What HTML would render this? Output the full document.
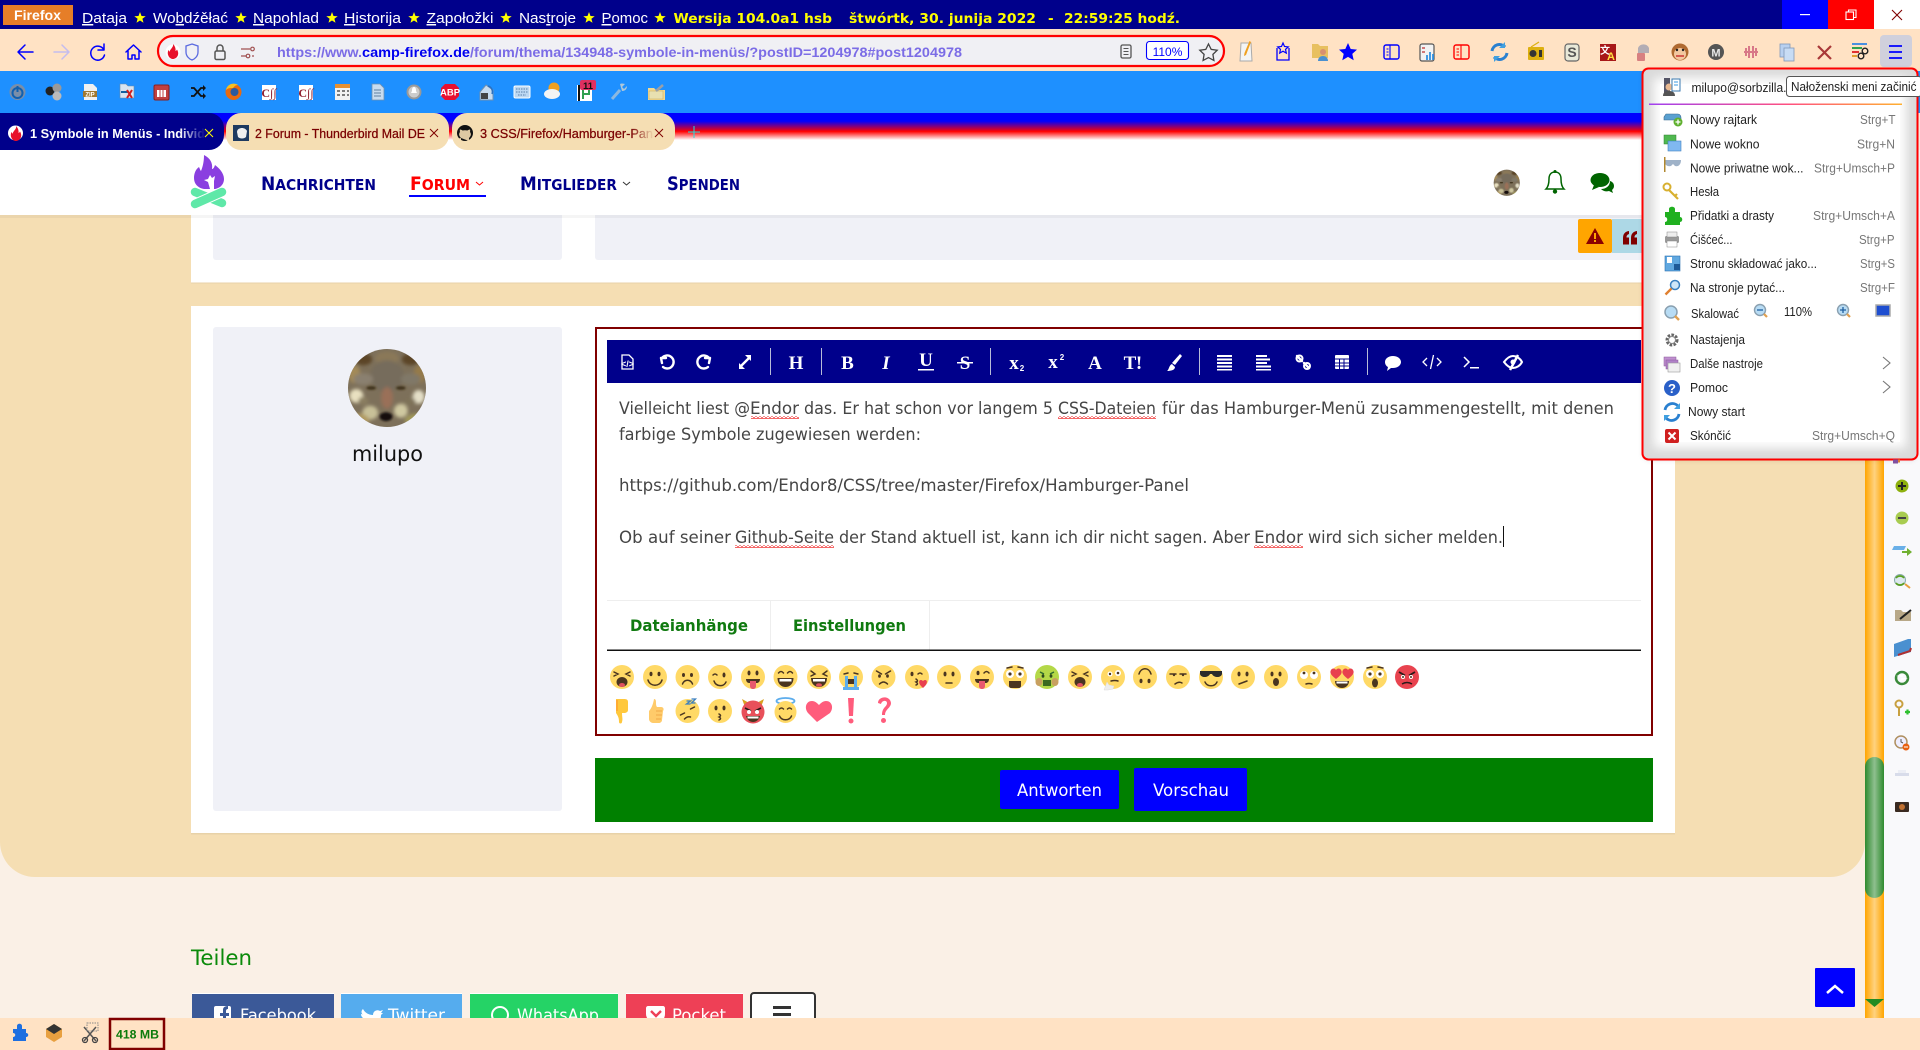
<!DOCTYPE html>
<html lang="de"><head><meta charset="utf-8"><title>Symbole in Menüs</title>
<style>
html,body{margin:0;padding:0;background:#fff;width:1920px;height:1050px;overflow:hidden}
svg{display:block}
text{font-family:"Liberation Sans",sans-serif;white-space:pre}
.d{font-family:"DejaVu Sans",sans-serif}
.r{font-family:"Liberation Serif",serif}
.b{font-weight:700}
.m{font-size:15px;fill:#fff}
.star{fill:#ff0}
.t{font-size:16.5px;fill:#454545;font-family:"DejaVu Sans",sans-serif}
.mi{font-size:12.6px;fill:#222}
.sc{font-size:12.6px;fill:#777}
.tb{fill:#fff;font-weight:700;font-family:"Liberation Serif",serif;font-size:19px;text-anchor:middle}
.nav{font-weight:700;font-size:15.5px;font-family:"DejaVu Sans",sans-serif}
.y{fill:#FFD966}
.k{fill:#4a3520}
.ks{fill:none;stroke:#4a3520;stroke-width:1.5;stroke-linecap:round}
.w{fill:#fff}
.ws{fill:none;stroke:#fff;stroke-width:2.4;stroke-linecap:round;stroke-linejoin:round}
.bs{fill:none;stroke:#00f;stroke-width:1.5;stroke-linecap:round;stroke-linejoin:round}
</style></head><body>
<svg xmlns="http://www.w3.org/2000/svg" width="1920" height="1050" viewBox="0 0 1920 1050">
<defs>
<linearGradient id="tg" x1="0" y1="0" x2="0" y2="1"><stop offset="0" stop-color="#00f"/><stop offset=".3" stop-color="#00f"/><stop offset=".68" stop-color="#f00"/><stop offset="1" stop-color="#fff"/></linearGradient>
<linearGradient id="sb" x1="0" y1="0" x2="1" y2="0"><stop offset="0" stop-color="#FFA500"/><stop offset=".5" stop-color="#FFD27F"/><stop offset="1" stop-color="#FFA500"/></linearGradient>
<linearGradient id="th" x1="0" y1="0" x2="1" y2="0"><stop offset="0" stop-color="#2E8B2E"/><stop offset=".5" stop-color="#8FBF8F"/><stop offset="1" stop-color="#2E8B2E"/></linearGradient>
<linearGradient id="sep" x1="0" y1="0" x2="1" y2="0"><stop offset="0" stop-color="#A040F0"/><stop offset=".55" stop-color="#FF5080"/><stop offset="1" stop-color="#FFB030"/></linearGradient>
<linearGradient id="f1" x1="0" y1="0" x2="1" y2="0"><stop offset="0" stop-color="#00008B" stop-opacity="0"/><stop offset="1" stop-color="#00008B"/></linearGradient>
<linearGradient id="f2" x1="0" y1="0" x2="1" y2="0"><stop offset="0" stop-color="#F5DEB3" stop-opacity="0"/><stop offset="1" stop-color="#F5DEB3"/></linearGradient>
<pattern id="wv" width="4" height="3" patternUnits="userSpaceOnUse"><path d="M0 2.4L2 .6 4 2.4" fill="none" stroke="#e00" stroke-width=".8"/></pattern>
<filter id="bl2"><feGaussianBlur stdDeviation="2"/></filter>
<filter id="bl3"><feGaussianBlur stdDeviation="3"/></filter>
<filter id="bl5"><feGaussianBlur stdDeviation="5"/></filter>
<filter id="bl1"><feGaussianBlur stdDeviation="1.1"/></filter>
<clipPath id="wc"><circle r="39.5"/></clipPath>
<clipPath id="mc"><rect x="1643" y="69" width="274" height="390" rx="6"/></clipPath>
<symbol id="wolf" viewBox="-40 -40 80 80" overflow="visible"><g clip-path="url(#wc)"><rect x="-40" y="-40" width="80" height="80" fill="#7d705a"/>
<g filter="url(#bl2)"><ellipse cx="-24" cy="-29" rx="9" ry="6" fill="#5b4528"/><ellipse cx="24" cy="-29" rx="9" ry="6" fill="#5b4528"/><ellipse cx="-33" cy="-14" rx="6" ry="9" fill="#a38a58"/><ellipse cx="33" cy="-14" rx="6" ry="9" fill="#957a48"/><ellipse cx="0" cy="-30" rx="12" ry="7" fill="#8a7858"/><ellipse cx="0" cy="-12" rx="17" ry="16" fill="#766c5c"/><ellipse cx="-24" cy="-9" rx="10" ry="6" fill="#8a8070"/><ellipse cx="24" cy="-9" rx="10" ry="6" fill="#807868"/><ellipse cx="-31" cy="8" rx="7" ry="7" fill="#e8e0c0"/><ellipse cx="32" cy="9" rx="6" ry="7" fill="#e4dfc8"/><ellipse cx="-24" cy="13" rx="5" ry="4" fill="#8a7e60"/><ellipse cx="23" cy="14" rx="6" ry="4" fill="#7e7258"/><ellipse cx="14" cy="23" rx="7" ry="7" fill="#cfc8a0"/><ellipse cx="-17" cy="25" rx="8" ry="7" fill="#c8c098"/><ellipse cx="0" cy="10" rx="6" ry="11" fill="#9a7058"/><ellipse cx="-29" cy="33" rx="11" ry="7" fill="#b09a60"/><ellipse cx="29" cy="33" rx="11" ry="7" fill="#a09858"/></g>
<g filter="url(#bl1)"><ellipse cx="-1" cy="29" rx="6.500" ry="4.500" fill="#14110e"/><ellipse cx="-16" cy="0" rx="5" ry="1.800" fill="#3a2e18"/><ellipse cx="14" cy="0" rx="5" ry="1.800" fill="#3a2e18"/></g></g></symbol>
</defs>

<!-- page -->
<rect width="1920" height="1050" fill="#FAF0E6"/>
<rect x="0" y="150" width="1865" height="727" rx="35" fill="#F5DEB3"/>
<rect x="0" y="150" width="1865" height="100" fill="#F5DEB3"/>

<!-- previous post -->
<rect x="191" y="190" width="1484" height="93" fill="#fff"/>
<rect x="191" y="282.500" width="1484" height="1" fill="#e8d2a8"/>
<rect x="213" y="190" width="349" height="70" rx="3" fill="#F0F1F7"/>
<rect x="595" y="190" width="1059" height="70" rx="3" fill="#F0F1F7"/>
<rect x="1578" y="219" width="34" height="34" rx="2" fill="#FFA500"/>
<rect x="1612" y="219" width="34" height="34" fill="#ADD8E6"/>
<path d="M1595 228l9 16h-18z" fill="#8B0000"/><rect x="1594" y="233" width="2" height="6" fill="#FFA500"/><rect x="1594" y="240" width="2" height="2" fill="#FFA500"/>
<path d="M1629 231c-4 .5-6 3-6 7v6.500h6v-7h-2.500c0-2 1-3 2.500-3.500zM1637 231c-4 .5-6 3-6 7v6.500h6v-7h-2.500c0-2 1-3 2.500-3.500z" fill="#800000"/>

<!-- post card -->
<rect x="191" y="306" width="1484" height="528" fill="#fff"/>
<rect x="191" y="833" width="1484" height="1.500" fill="#e8d2a8"/>
<rect x="213" y="327" width="349" height="484" rx="3" fill="#F0F1F7"/>
<use href="#wolf" x="347.500" y="348.500" width="79" height="79"/>
<text x="352" y="461" class="d" font-size="21" fill="#111" textLength="71" lengthAdjust="spacingAndGlyphs">milupo</text>

<!-- editor -->
<rect x="596" y="328" width="1056" height="407" fill="#fff" stroke="#800000" stroke-width="2"/>
<rect x="607" y="340" width="1034" height="43" fill="#00008B"/>
<g fill="#b8bcd8"><rect x="770" y="348" width="1" height="27"/><rect x="821" y="348" width="1" height="27"/><rect x="990" y="348" width="1" height="27"/><rect x="1199" y="348" width="1" height="27"/><rect x="1367" y="348" width="1" height="27"/></g>
<g>
<path d="M622 355h7l4 4v10h-11z" fill="none" stroke="#fff" stroke-width="1.3"/><text x="627.500" y="367" font-size="9" fill="#fff" text-anchor="middle" class="b">&lt;/&gt;</text>
<path d="M661 358l1 5M661 358l5 0M662 358a6.500 6.500 0 1 1 1 9" class="ws"/>
<path d="M710 358l-1 5M710 358l-5 0M709 358a6.500 6.500 0 1 0-1 9" class="ws"/>
<path d="M741 366l8-8" class="ws"/><path d="M745 355h6v6zM739 363v6h6z" class="w"/>
<text x="796" y="369" class="tb">H</text>
<text x="847.500" y="369" class="tb">B</text>
<text x="886" y="369" class="tb" font-style="italic">I</text>
<text x="926" y="366" class="tb" font-size="17">U</text><rect x="918" y="369" width="16" height="1.500" fill="#fff"/>
<text x="965" y="369" class="tb" font-weight="400">S</text><rect x="957" y="362" width="16" height="1.500" fill="#fff"/>
<text x="1014" y="369" class="tb" font-size="16" font-family="Liberation Sans">x</text><text x="1022" y="371" fill="#fff" font-size="8" class="b" text-anchor="middle">2</text>
<text x="1053" y="368" class="tb" font-size="16">x</text><text x="1062" y="360" fill="#fff" font-size="8" class="b" text-anchor="middle">2</text>
<text x="1095" y="369" class="tb">A</text>
<text x="1130" y="369" class="tb" font-size="16">T</text><text x="1139" y="369" class="tb" font-size="13">!</text>
<path d="M1180 354l2 2-7 9-3-2zM1172 364l3 3c0 3-4 4-8 4 2-1 2-6 5-7z" class="w"/>
<g fill="#fff"><rect x="1217" y="355" width="15" height="2"/><rect x="1217" y="358.500" width="15" height="2"/><rect x="1217" y="362" width="15" height="2"/><rect x="1217" y="365.500" width="15" height="2"/><rect x="1217" y="369" width="15" height="1.500"/>
<rect x="1256" y="355" width="11" height="2"/><rect x="1256" y="358.500" width="14" height="2"/><rect x="1256" y="362" width="11" height="2"/><rect x="1256" y="365.500" width="15" height="2"/><rect x="1256" y="369" width="15" height="1.500"/></g>
<path d="M1297 356l5 5M1304 363l5 5" class="ws" stroke-width="1.600"/><circle cx="1299.500" cy="358.500" r="3" fill="none" stroke="#fff" stroke-width="2"/><circle cx="1307" cy="366" r="3" fill="none" stroke="#fff" stroke-width="2"/>
<rect x="1335" y="355" width="14" height="14" rx="1" fill="#fff"/><path d="M1335 359h14M1335 363h14M1335 366h14M1339.500 359v10M1344 359v10" stroke="#00008B" stroke-width="1"/>
<path d="M1393 356c5 0 8 3 8 6s-3 6-8 6c-1 0-2 0-2 0l-4 3 1-4c-2-1-3-3-3-5 0-3 3-6 8-6z" class="w"/>
<path d="M1427 358l-4 4 4 4M1437 358l4 4-4 4M1433.500 355l-3 14" fill="none" stroke="#fff" stroke-width="1.300"/>
<path d="M1464 357l5 5-5 5" fill="none" stroke="#fff" stroke-width="1.500"/><rect x="1470" y="367" width="9" height="1.500" fill="#fff"/>
<path d="M1504 362c3-4 6-6 9-6s7 2 9 6c-2 4-6 6-9 6s-6-2-9-6z" fill="none" stroke="#fff" stroke-width="2"/><path d="M1510 370l8-15" stroke="#fff" stroke-width="2.500"/><circle cx="1513" cy="362" r="2.500" fill="#fff"/>
</g>

<text x="619" y="414" class="t" textLength="131" lengthAdjust="spacingAndGlyphs">Vielleicht liest @</text>
<text x="750" y="414" class="t" textLength="49" lengthAdjust="spacingAndGlyphs">Endor</text>
<text x="804" y="414" class="t" textLength="249" lengthAdjust="spacingAndGlyphs">das. Er hat schon vor langem 5</text>
<text x="1058" y="414" class="t" textLength="98" lengthAdjust="spacingAndGlyphs">CSS-Dateien</text>
<text x="1162" y="414" class="t" textLength="452" lengthAdjust="spacingAndGlyphs">für das Hamburger-Menü zusammengestellt, mit denen</text>
<text x="619" y="440" class="t" textLength="302" lengthAdjust="spacingAndGlyphs">farbige Symbole zugewiesen werden:</text>
<text x="619" y="491" class="t" textLength="570" lengthAdjust="spacingAndGlyphs">https://github.com/Endor8/CSS/tree/master/Firefox/Hamburger-Panel</text>
<text x="619" y="543" class="t" textLength="112" lengthAdjust="spacingAndGlyphs">Ob auf seiner</text>
<text x="735" y="543" class="t" textLength="99" lengthAdjust="spacingAndGlyphs">Github-Seite</text>
<text x="839" y="543" class="t" textLength="411" lengthAdjust="spacingAndGlyphs">der Stand aktuell ist, kann ich dir nicht sagen. Aber</text>
<text x="1254" y="543" class="t" textLength="49" lengthAdjust="spacingAndGlyphs">Endor</text>
<text x="1308" y="543" class="t" textLength="195" lengthAdjust="spacingAndGlyphs">wird sich sicher melden.</text>
<rect x="1503" y="526" width="1" height="21" fill="#111"/>
<g fill="url(#wv)"><rect x="751" y="416" width="48" height="3"/><rect x="1058" y="416" width="98" height="3"/><rect x="735" y="545" width="99" height="3"/><rect x="1254" y="545" width="49" height="3"/></g>

<rect x="607" y="600" width="1034" height="1" fill="#eee"/>
<rect x="770" y="601" width="1" height="49" fill="#eee"/><rect x="929" y="601" width="1" height="49" fill="#eee"/>
<text x="630" y="631" class="d b" font-size="16" fill="#107a10" textLength="118" lengthAdjust="spacingAndGlyphs">Dateianhänge</text>
<text x="793" y="631" class="d b" font-size="16" fill="#107a10" textLength="113" lengthAdjust="spacingAndGlyphs">Einstellungen</text>
<rect x="607" y="649.500" width="1034" height="1.500" fill="#111"/>

<!-- emoji row 1 -->
<g transform="translate(622,677)"><circle r="12" class="y"/><path d="M-8-5l4 2-4 2M8-5l-4 2 4 2" class="ks"/><ellipse cy="5" rx="5.500" ry="5" class="k"/><ellipse cy="8" rx="3" ry="2" fill="#e05060"/></g>
<g transform="translate(655,677)"><circle r="12" class="y"/><ellipse cx="-4" cy="-3" rx="1.500" ry="2.200" class="k"/><ellipse cx="4" cy="-3" rx="1.500" ry="2.200" class="k"/><path d="M-7 3c2 7 12 7 14 0" class="ks"/></g>
<g transform="translate(687.500,677)"><circle r="12" class="y"/><ellipse cx="-4" cy="-2" rx="1.500" ry="2" class="k"/><ellipse cx="4" cy="-2" rx="1.500" ry="2" class="k"/><path d="M-5 7c2-5 8-5 10 0" class="ks"/></g>
<g transform="translate(720,677)"><circle r="12" class="y"/><path d="M-7-2q2-2 4 0" class="ks"/><ellipse cx="4" cy="-2" rx="1.500" ry="2.500" class="k"/><path d="M-6 4c2 6 10 6 12 1" class="ks"/></g>
<g transform="translate(753,677)"><circle r="12" class="y"/><ellipse cx="-4" cy="-4" rx="1.500" ry="2.500" class="k"/><ellipse cx="4" cy="-4" rx="1.500" ry="2.500" class="k"/><path d="M-7 2h14c0 3-2 4-3 4H-4c-2 0-3-2-3-4z" class="k"/><path d="M-3 4h6v5c0 4-6 4-6 0z" fill="#e8596e"/></g>
<g transform="translate(785.500,677)"><circle r="12" class="y"/><path d="M-7-4q2.500-3 5 0M2-4q2.500-3 5 0" class="ks"/><path d="M-8 1h16c0 6-4 9-8 9s-8-3-8-9z" class="k"/><rect x="-6" y="2" width="12" height="2.500" fill="#fff"/></g>
<g transform="translate(819,677)"><circle r="12" class="y"/><path d="M-8-6l4 3-4 2M8-6l-4 3 4 2" class="ks"/><path d="M-8 1h16c0 6-4 9-8 9s-8-3-8-9z" class="k"/><rect x="-6" y="2" width="12" height="2.500" fill="#fff"/><ellipse cy="8" rx="3" ry="1.800" fill="#e05060"/></g>
<g transform="translate(851,677)"><circle r="12" class="y"/><path d="M-7-3l4-1M3-4l4 1" class="ks"/><path d="M-6 2h12v5H-6z" class="k"/><path d="M-6-1h3v11h3v3h-8v-3h2zM6-1h-3v11h-3v3h8v-3h-2z" fill="#5DADEC"/></g>
<g transform="translate(883.500,677)"><circle r="12" class="y"/><path d="M-7-6l5 3M7-6l-5 3" class="ks"/><ellipse cx="-4" cy="-1" rx="1.400" ry="1.800" class="k"/><ellipse cx="4" cy="-1" rx="1.400" ry="1.800" class="k"/><path d="M-4 7q4-4 8 0" class="ks"/></g>
<g transform="translate(917,677)"><circle r="12" class="y"/><ellipse cx="-5" cy="-3" rx="1.500" ry="2.200" class="k"/><path d="M1-3q2-2 4 0" class="ks"/><path d="M-1 2q3 2 0 3q3 2 0 3" class="ks"/><path d="M4 9c-2-2-3-6 0-6 1 0 2 1 2 1s1-1 2-1c3 0 2 4 0 6l-2 2z" fill="#E8404E"/></g>
<g transform="translate(949,677)"><circle r="12" class="y"/><ellipse cx="-4" cy="-3" rx="1.500" ry="2.400" class="k"/><ellipse cx="4" cy="-3" rx="1.500" ry="2.400" class="k"/><path d="M-3 6h6" class="ks"/></g>
<g transform="translate(982,677)"><circle r="12" class="y"/><ellipse cx="-4" cy="-4" rx="1.500" ry="2.200" class="k"/><path d="M2-4q2.500-3 5 0" class="ks"/><path d="M-7 2h14c0 3-2 4-3 4H-4c-2 0-3-2-3-4z" class="k"/><path d="M-3 4h6v5c0 4-6 4-6 0z" fill="#e8596e"/></g>
<g transform="translate(1015,677)"><circle r="12" class="y"/><circle cx="-5" cy="-3" r="4" class="w"/><circle cx="5" cy="-3" r="4" class="w"/><circle cx="-5" cy="-3" r="1.600" class="k"/><circle cx="5" cy="-3" r="1.600" class="k"/><path d="M-8-9l5-1M8-9l-5-1" class="ks"/><path d="M-6 4h12v5c0 1-1 2-2 2H-4c-1 0-2-1-2-2z" class="k"/></g>
<g transform="translate(1047,677)"><circle r="12" fill="#B4D848"/><ellipse cx="-8" cy="5" rx="3.500" ry="4" fill="#C8A060"/><ellipse cx="8" cy="5" rx="3.500" ry="4" fill="#C8A060"/><path d="M-7-5l4 2M7-5l-4 2" fill="none" stroke="#2e6b2e" stroke-width="1.500"/><ellipse cx="-4" cy="-1" rx="1.400" ry="1.800" fill="#2e4b1e"/><ellipse cx="4" cy="-1" rx="1.400" ry="1.800" fill="#2e4b1e"/><path d="M-4 3h8v6h-8z" fill="#3a6a20"/></g>
<g transform="translate(1080,677)"><circle r="12" class="y"/><path d="M-8-5l4 2-4 2M8-5l-4 2 4 2" class="ks"/><ellipse cy="5" rx="5.500" ry="5" class="k"/><ellipse cy="8" rx="3" ry="2" fill="#e05060"/></g>
<g transform="translate(1113,677)"><circle r="12" class="y"/><circle cx="-3" cy="-3" r="2.500" class="w"/><circle cx="5" cy="-4" r="3" class="w"/><circle cx="-3" cy="-3" r="1.200" class="k"/><circle cx="5" cy="-4" r="1.300" class="k"/><path d="M-2 4q4-1 7 0" class="ks"/><path d="M-9 13l3-8 2 3 5 1-1 3-5 1z" fill="#eee" stroke="#ddd" stroke-width=".5"/></g>
<g transform="translate(1145,677)"><circle r="12" class="y"/><path d="M-6-3c2-7 10-7 12 0" class="ks"/><ellipse cx="-4" cy="4" rx="1.500" ry="2.200" class="k"/><ellipse cx="4" cy="4" rx="1.500" ry="2.200" class="k"/></g>
<g transform="translate(1178,677)"><circle r="12" class="y"/><path d="M-8-3h6M2-3h6" class="ks"/><circle cx="-4" cy="-2" r="1.200" class="k"/><circle cx="5" cy="-2" r="1.200" class="k"/><path d="M-3 7q4-3 7-1" class="ks"/></g>
<g transform="translate(1211,677)"><circle r="12" class="y"/><path d="M-11-6h22v3c-1 4-8 4-10 0h-2c-2 4-9 4-10 0z" fill="#2b2b2b"/><path d="M-6 5c2 5 10 5 12 0" class="ks"/></g>
<g transform="translate(1243,677)"><circle r="12" class="y"/><ellipse cx="-4" cy="-3" rx="1.500" ry="2.400" class="k"/><ellipse cx="4" cy="-3" rx="1.500" ry="2.400" class="k"/><path d="M-4 7l8-3" class="ks"/></g>
<g transform="translate(1276,677)"><circle r="12" class="y"/><ellipse cx="-4" cy="-3" rx="1.500" ry="2.400" class="k"/><ellipse cx="4" cy="-3" rx="1.500" ry="2.400" class="k"/><ellipse cy="5" rx="3" ry="4" class="k"/></g>
<g transform="translate(1309,677)"><circle r="12" class="y"/><circle cx="-5" cy="-2" r="4" class="w"/><circle cx="5" cy="-2" r="4" class="w"/><circle cx="-5" cy="-4" r="1.400" class="k"/><circle cx="5" cy="-4" r="1.400" class="k"/><path d="M-3 7q3-1 6 0" class="ks"/></g>
<g transform="translate(1342,677)"><circle r="12" class="y"/><path d="M-6 2c-4-3-7-6-5-9 1-2 4-2 5 0 1-2 4-2 5 0 2 3-1 6-5 9zM6 2c-4-3-7-6-5-9 1-2 4-2 5 0 1-2 4-2 5 0 2 3-1 6-5 9z" fill="#E8404E"/><path d="M-7 4h14c0 4-3 7-7 7s-7-3-7-7z" class="k"/><rect x="-5.500" y="4.500" width="11" height="2" fill="#fff"/></g>
<g transform="translate(1375,677)"><circle r="12" class="y"/><circle cx="-5" cy="-3" r="4" class="w"/><circle cx="5" cy="-3" r="4" class="w"/><circle cx="-5" cy="-3" r="1.600" class="k"/><circle cx="5" cy="-3" r="1.600" class="k"/><path d="M-8-9l5-1M8-9l-5-1" class="ks"/><ellipse cy="6" rx="3" ry="4.500" class="k"/></g>
<g transform="translate(1407,677)"><circle r="12" fill="#E8434F"/><path d="M-8-5l6 3.500M8-5l-6 3.500" stroke="#2b1a1a" stroke-width="1.800"/><circle cx="-4" cy="0" r="2" class="w"/><circle cx="4" cy="0" r="2" class="w"/><circle cx="-4" cy="0" r="1" class="k"/><circle cx="4" cy="0" r="1" class="k"/><path d="M-5 7q5-3 10 0" fill="none" stroke="#2b1a1a" stroke-width="1.500"/></g>
<!-- emoji row 2 -->
<g transform="translate(622,711)"><path d="M-6-12h8c3 0 4 1 4 3v8c0 2-2 3-4 3H0c0 4 1 6 0 9 0 2-3 2-3 0 0-4-1-6-3-9z" fill="#FFC83D"/><rect x="-6" y="-11" width="2" height="11" fill="#FFAC33"/></g>
<g transform="translate(655,711)"><path d="M-1-12c2 0 2 2 2 4 0 1 0 3 1 4h4c3 0 3 3 2 4l-1 9c0 2-2 3-3 3h-6c-2 0-4-2-4-4v-8c2-2 4-6 5-12z" fill="#FFCB6A"/><path d="M1 0h6M1 4h6M1 8h5" stroke="#F0A848" stroke-width="1"/></g>
<g transform="translate(687.500,711)"><circle r="12" class="y"/><path d="M-7 4l4-2M3-2l4-2M-3 8q3-3 6-2" class="ks"/><path d="M-1-10h4l-4 3h4M4-12h4l-4 4h4" fill="none" stroke="#3B7FBF" stroke-width="1.300"/></g>
<g transform="translate(720,711)"><circle r="12" class="y"/><ellipse cx="-4" cy="-3" rx="1.500" ry="2.400" class="k"/><ellipse cx="4" cy="-3" rx="1.500" ry="2.400" class="k"/><path d="M-1 3q3 1.500 0 3q3 1.500 0 3" class="ks"/></g>
<g transform="translate(753,711)"><path d="M-11-12l3 8 6-3zM11-12l-3 8-6-3z" fill="#D8A020"/><circle cy="1" r="11.500" fill="#E8505A"/><path d="M-8-3l6 3M8-3l-6 3" stroke="#2b1a1a" stroke-width="1.600"/><circle cx="-4" cy="1" r="2" class="w"/><circle cx="4" cy="1" r="2" class="w"/><path d="M-7 5h14c-1 4-4 6-7 6s-6-2-7-6z" class="k"/><rect x="-5.500" y="5.500" width="11" height="2" fill="#fff"/></g>
<g transform="translate(785.500,711)"><ellipse cy="-10" rx="9" ry="3" fill="none" stroke="#5DADEC" stroke-width="1.800"/><circle cy="1" r="11" class="y"/><path d="M-6-2q2-2 4 0M2-2q2-2 4 0" class="ks"/><path d="M-6 5c2 5 10 5 12 0" class="ks"/></g>
<path d="M817 721l-9-9c-4-5-2-12 4-12 3 0 5 2 7 4 2-2 4-4 7-4 6 0 8 7 4 12z" fill="#FF5C7C" transform="translate(0,1)"/>
<path d="M848 698h6l-1 18h-4z" fill="#FF5C7C"/><circle cx="851" cy="721" r="2.500" fill="#FF5C7C"/>
<path d="M878 703c0-7 12-8 13 0 0 5-6 6-6 12h-3c0-8 5-8 5-12 0-3-5-3-6 1z" fill="#FF5C7C"/><circle cx="883.500" cy="720.500" r="2.500" fill="#FF5C7C"/>

<!-- action bar -->
<rect x="595" y="758" width="1058" height="64" fill="#008000"/>
<rect x="1000" y="770" width="119" height="39" rx="2" fill="#00f"/>
<rect x="1134" y="768" width="113" height="43" rx="2" fill="#00f"/>
<text x="1017" y="796" class="d" font-size="16.500" fill="#fff" textLength="85" lengthAdjust="spacingAndGlyphs">Antworten</text>
<text x="1153" y="796" class="d" font-size="16.500" fill="#fff" textLength="76" lengthAdjust="spacingAndGlyphs">Vorschau</text>

<!-- share -->
<text x="191" y="965" class="d" font-size="21" fill="#0a8a0a" textLength="61" lengthAdjust="spacingAndGlyphs">Teilen</text>
<rect x="192" y="994" width="142" height="40" fill="#3B5998"/><rect x="192" y="993" width="142" height="1" fill="#fff"/>
<rect x="341" y="994" width="121" height="40" fill="#55ACEE"/><rect x="341" y="993" width="121" height="1" fill="#fff"/>
<rect x="470" y="994" width="148" height="40" fill="#25D366"/><rect x="470" y="993" width="148" height="1" fill="#fff"/>
<rect x="626" y="994" width="117" height="40" fill="#EE4056"/><rect x="626" y="993" width="117" height="1" fill="#fff"/>
<rect x="751" y="993" width="64" height="40" rx="3" fill="#fff" stroke="#333" stroke-width="2"/>
<rect x="773" y="1006" width="18" height="3" fill="#333"/><rect x="773" y="1013" width="18" height="3" fill="#333"/>
<rect x="214" y="1006" width="17" height="20" rx="2" fill="#fff"/><path d="M228 1006c-4 0-5 2-5 4v3h-3v3h3v10h3v-10h3v-3h-3v-2c0-1 .5-2 2-2z" fill="#3B5998"/>
<path d="M363 1009c2 4 6 6 10 6 0-4 4-6 7-4l3-1-2 3 2 0-2 2c0 8-6 12-12 12-3 0-5-1-7-2 3 0 5-1 6-2-3 0-4-2-5-4h2c-3-1-4-3-4-5l2 .5c-2-1-2-4 0-5.500z" class="w"/>
<circle cx="500" cy="1015" r="8" fill="none" stroke="#fff" stroke-width="2"/>
<path d="M648 1006h15c1 0 2 1 2 2v6c0 5-4 9-9 9s-10-4-10-9v-6c0-1 1-2 2-2z" class="w"/><path d="M651 1011l5 5 5-5" fill="none" stroke="#EE4056" stroke-width="2.400"/>
<text x="240" y="1021" class="d" font-size="17" fill="#fff" textLength="76" lengthAdjust="spacingAndGlyphs">Facebook</text>
<text x="388" y="1021" class="d" font-size="17" fill="#fff" textLength="57" lengthAdjust="spacingAndGlyphs">Twitter</text>
<text x="517" y="1021" class="d" font-size="17" fill="#fff" textLength="82" lengthAdjust="spacingAndGlyphs">WhatsApp</text>
<text x="672" y="1021" class="d" font-size="17" fill="#fff" textLength="54" lengthAdjust="spacingAndGlyphs">Pocket</text>

<!-- back to top -->
<rect x="1815" y="968" width="40" height="39" rx="1" fill="#00f"/>
<path d="M1827 993l8-7 8 7" fill="none" stroke="#fff" stroke-width="2.500"/>

<!-- scrollbar + sidebar -->
<rect x="1865" y="150" width="19" height="868" fill="url(#sb)"/>
<rect x="1865" y="757" width="19" height="141" rx="9.500" fill="url(#th)"/>
<path d="M1865 999h19l-9.500 8z" fill="#228B22"/>
<rect x="1884" y="150" width="36" height="868" fill="#F9F9FB"/>
<g>
<circle cx="1902" cy="486" r="6.500" fill="#8DB00E"/><path d="M1898 486h8M1902 482v8" stroke="#222" stroke-width="2"/>
<circle cx="1902" cy="518" r="6.500" fill="#A8CC50"/><path d="M1898 518h8" stroke="#444" stroke-width="2"/>
<path d="M1894 546h12l-2 4h-12z" fill="#6AB0E8"/><path d="M1902 551h5v-3l5 4-5 4v-3h-5z" fill="#70B030"/>
<circle cx="1900" cy="580" r="5.500" fill="#dde8ee" stroke="#8aa" stroke-width="1"/><path d="M1896 578a5 5 0 0 1 8 0M1904 583a5 5 0 0 1-8 0" stroke="#5AA020" stroke-width="1.800" fill="none"/><path d="M1905 584l5 4" stroke="#E8A040" stroke-width="2"/>
<path d="M1895 610h6l2 2h8v9h-16z" fill="#B8A888"/><path d="M1900 619l11-9" stroke="#222" stroke-width="2"/>
<path d="M1894 644l14-5h3v13l-17 5z" fill="#4A90D0"/><path d="M1898 655l12-4 1-3" stroke="#B03030" stroke-width="2" fill="none"/>
<circle cx="1902" cy="678" r="6" fill="none" stroke="#3A8A3A" stroke-width="2.500"/><path d="M1896 676l8-2-2 4 6 0-8 3 2-4z" fill="#fff"/>
<circle cx="1899" cy="704" r="3.500" fill="none" stroke="#C8A040" stroke-width="2"/><path d="M1899 707v9" stroke="#C8A040" stroke-width="2"/><path d="M1905 712h5M1907.500 709.500v5" stroke="#30C030" stroke-width="2.200"/>
<circle cx="1901" cy="742" r="6" fill="#eef" stroke="#B09060" stroke-width="1.500"/><path d="M1901 739v3l2 1" stroke="#555" fill="none"/><circle cx="1906" cy="747" r="3.500" fill="#E86010"/><path d="M1904 747h4" stroke="#fff"/>
<rect x="1895" y="773" width="14" height="3" fill="#d8dcea"/><rect x="1898" y="770" width="8" height="3" fill="#eceef5"/>
<rect x="1895" y="802" width="14" height="10" rx="1" fill="#3a2a20"/><circle cx="1902" cy="807" r="3" fill="#C07030"/>
</g>

<!-- header of site -->
<rect x="0" y="150" width="1884" height="65" fill="#fff"/>
<rect x="0" y="215" width="1865" height="3" fill="#000" opacity=".04"/>
<path d="M204 155c6 3 9 8 8 14 1 0 2-1 3-4 4 3 9 8 9 14 0 6-5 10-10 10h-10c-6-1-10-5-10-11 0-5 2-9 5-11 1 2 1 3 2 4 2-5 3-10 3-16z" fill="#8A3FE0"/>
<path d="M210 189l-2-7-4-2 4-1 2-4 2 3 3-2-1 5 0 8z" fill="#fff"/>
<path d="M195 192l27 11" stroke="#5FE8A8" stroke-width="8.500" stroke-linecap="round"/>
<path d="M222 192l-27 12" stroke="#fff" stroke-width="10.500" stroke-linecap="round"/>
<path d="M222 192l-27 12" stroke="#5FE8A8" stroke-width="8.500" stroke-linecap="round"/>
<text x="261" y="190" class="nav" fill="#00008B" textLength="115" lengthAdjust="spacingAndGlyphs"><tspan font-size="19">N</tspan>ACHRICHTEN</text>
<text x="410" y="190" class="nav" fill="#f00" textLength="60" lengthAdjust="spacingAndGlyphs"><tspan font-size="19">F</tspan>ORUM</text>
<path d="M476 182l3.500 3 3.500-3" fill="none" stroke="#f00" stroke-width="1"/>
<rect x="409" y="195" width="77" height="2" fill="#00f"/>
<text x="520" y="190" class="nav" fill="#00008B" textLength="97" lengthAdjust="spacingAndGlyphs"><tspan font-size="19">M</tspan>ITGLIEDER</text>
<path d="M623 182l3.500 3 3.500-3" fill="none" stroke="#333" stroke-width="1"/>
<text x="667" y="190" class="nav" fill="#00008B" textLength="73" lengthAdjust="spacingAndGlyphs"><tspan font-size="19">S</tspan>PENDEN</text>
<use href="#wolf" x="1493.500" y="169.500" width="26.500" height="26.500"/>
<path d="M1555 172c-4 0-6 3-6 7 0 5-1 8-3 10h18c-2-2-3-5-3-10 0-4-2-7-6-7z" fill="#fff" stroke="#006400" stroke-width="1.500"/><circle cx="1555" cy="191.500" r="2.200" fill="#006400"/><circle cx="1555" cy="171.500" r="1.500" fill="#006400"/>
<ellipse cx="1600" cy="180" rx="9.500" ry="7" fill="#006400"/><path d="M1594 185l-2 5 7-3z" fill="#006400"/><path d="M1610 181c3 1 4 3 4 5s-1 3-2 4l1 3-4-2c-3 1-6 0-8-2 5 0 9-3 9-8z" fill="#006400"/>

<!-- title bar -->
<rect width="1920" height="29" fill="#00008B"/>
<rect x="3" y="5" width="70" height="20" fill="#E67E28"/>
<text x="14" y="20" class="b" font-size="13.500" fill="#fff" textLength="47" lengthAdjust="spacingAndGlyphs">Firefox</text>
<text x="82" y="23" class="m" textLength="45" lengthAdjust="spacingAndGlyphs"><tspan text-decoration="underline">D</tspan>ataja</text>
<text x="153" y="23" class="m" textLength="75" lengthAdjust="spacingAndGlyphs">Wo<tspan text-decoration="underline">b</tspan>dźěłać</text>
<text x="253" y="23" class="m" textLength="66" lengthAdjust="spacingAndGlyphs"><tspan text-decoration="underline">N</tspan>apohlad</text>
<text x="344" y="23" class="m" textLength="57" lengthAdjust="spacingAndGlyphs"><tspan text-decoration="underline">H</tspan>istorija</text>
<text x="426.500" y="23" class="m" textLength="67" lengthAdjust="spacingAndGlyphs"><tspan text-decoration="underline">Z</tspan>apołožki</text>
<text x="519" y="23" class="m" textLength="57" lengthAdjust="spacingAndGlyphs">Nas<tspan text-decoration="underline">t</tspan>roje</text>
<text x="601.500" y="23" class="m" textLength="46.500" lengthAdjust="spacingAndGlyphs"><tspan text-decoration="underline">P</tspan>omoc</text>
<g class="star" transform="translate(0,-4)"><path d="M140 16l1.500 4 4.200.2-3.300 2.600 1.100 4-3.500-2.300-3.500 2.300 1.100-4-3.300-2.600 4.200-.2z"/>
<path d="M241 16l1.500 4 4.200.2-3.300 2.600 1.100 4-3.500-2.300-3.500 2.300 1.100-4-3.300-2.600 4.200-.2z"/><path d="M332 16l1.500 4 4.200.2-3.300 2.600 1.100 4-3.500-2.300-3.500 2.300 1.100-4-3.300-2.600 4.200-.2z"/><path d="M414 16l1.500 4 4.200.2-3.300 2.600 1.100 4-3.500-2.300-3.500 2.300 1.100-4-3.300-2.600 4.200-.2z"/><path d="M506 16l1.500 4 4.200.2-3.300 2.600 1.100 4-3.500-2.300-3.500 2.300 1.100-4-3.300-2.600 4.200-.2z"/><path d="M589 16l1.500 4 4.200.2-3.300 2.600 1.100 4-3.500-2.300-3.500 2.300 1.100-4-3.300-2.600 4.200-.2z"/><path d="M660 16l1.500 4 4.200.2-3.300 2.600 1.100 4-3.500-2.300-3.500 2.300 1.100-4-3.300-2.600 4.200-.2z"/></g>
<text x="673.500" y="23" class="d b" font-size="13.500" fill="#ff0" textLength="158.500" lengthAdjust="spacingAndGlyphs">Wersija 104.0a1 hsb</text>
<text x="849" y="23" class="d b" font-size="13.500" fill="#ff0" textLength="187" lengthAdjust="spacingAndGlyphs">štwórtk, 30. junija 2022</text>
<text x="1048" y="23" class="d b" font-size="13.500" fill="#ff0">-</text>
<text x="1064" y="23" class="d b" font-size="13.500" fill="#ff0" textLength="116" lengthAdjust="spacingAndGlyphs">22:59:25 hodź.</text>
<rect x="1782" width="46" height="29" fill="#00f"/><rect x="1828" width="46" height="29" fill="#f00"/><rect x="1874" width="46" height="29" fill="#fff"/>
<rect x="1800" y="14" width="10" height="1.200" fill="#fff"/>
<rect x="1846" y="12" width="7.500" height="7.500" fill="none" stroke="#fff" stroke-width="1.100"/><path d="M1848.500 12v-2h7.500v7.500h-2.500" fill="none" stroke="#fff" stroke-width="1.100"/>
<path d="M1892 10l10 10M1902 10l-10 10" stroke="#800000" stroke-width="1.100"/>

<!-- nav bar -->
<rect y="29" width="1920" height="42" fill="#FFE2C4"/>
<path d="M33 52H19M25 45l-7 7 7 7" class="bs"/>
<path d="M54 52h14M62 45l7 7-7 7" class="bs" style="stroke:#C4BCEE"/>
<path d="M104 50a7 7 0 1 0 .5 5M104 44v6h-6" class="bs"/>
<path d="M126 52l7.500-7 7.500 7M128 51v8h4v-4h3v4h4v-8" class="bs"/>
<rect x="158" y="36" width="1066" height="30" rx="15" fill="#F0F0F4" stroke="#f00" stroke-width="2.200"/>
<circle cx="173" cy="52" r="7.500" fill="#fff"/><path d="M173 44c1 3-3 5-3.500 8-.3-1-1-2-1-2-1 2-1 4 0 6s3 3 4.500 3 4-1 5-4c.5-2 0-4-1-5.500-.5 1-1 1.500-1.500 1.500.5-3-1-5.500-2.500-7z" fill="#e8102a"/>
<path d="M192 44l6 2v6c0 4-3 7-6 8-3-1-6-4-6-8v-6z" fill="none" stroke="#5a6ae0" stroke-width="1.300"/>
<rect x="215" y="51" width="10" height="8.500" rx="1.500" fill="none" stroke="#555" stroke-width="1.500"/><path d="M217 51v-3a3 3 0 0 1 6 0v3" fill="none" stroke="#555" stroke-width="1.500"/>
<path d="M241 49h9M252 56h2M241 56h5" stroke="#a05050" stroke-width="1.300"/><circle cx="252.500" cy="49" r="1.800" fill="none" stroke="#a05050" stroke-width="1.200"/><circle cx="248" cy="56" r="1.800" fill="none" stroke="#a05050" stroke-width="1.200"/>
<text x="277" y="57" class="b" font-size="13.500" fill="#7B6CE6" textLength="85" lengthAdjust="spacingAndGlyphs">https://www.</text>
<text x="362" y="57" class="b" font-size="13.500" fill="#0000F0" textLength="108" lengthAdjust="spacingAndGlyphs">camp-firefox.de</text>
<text x="470" y="57" class="b" font-size="13.500" fill="#7B6CE6" textLength="492" lengthAdjust="spacingAndGlyphs">/forum/thema/134948-symbole-in-menüs/?postID=1204978#post1204978</text>
<rect x="1121" y="45" width="10" height="13" rx="1.500" fill="none" stroke="#555" stroke-width="1.300"/><path d="M1123.500 48.500h5M1123.500 51.500h5M1123.500 54.500h5" stroke="#555"/>
<rect x="1146.500" y="41.500" width="42" height="18" rx="3" fill="#fff" stroke="#00f" stroke-width="1.100"/>
<text x="1167.500" y="56" font-size="12" fill="#00f" text-anchor="middle">110%</text>
<path d="M1208.500 44l2.700 5.400 6 .8-4.300 4.200 1 6-5.400-2.800-5.400 2.800 1-6-4.300-4.200 6-.8z" fill="none" stroke="#444" stroke-width="1.300"/>

<!-- nav right icons -->
<path d="M1241 43h10l1 18h-12z" fill="#f4f4f4" stroke="#aaa"/><path d="M1251 42l-5 13-2 1 .5-3 5-12z" fill="#F0A020"/>
<path d="M1277 48v12h12v-12" fill="none" stroke="#00f" stroke-width="1.300"/><path d="M1283 43l1.500 3.500 3.800.4-2.800 2.500.8 3.700-3.300-1.900-3.300 1.900.8-3.700-2.800-2.500 3.800-.4z" fill="#FFE2C4" stroke="#00f" stroke-width="1.200"/>
<path d="M1312 44h6l2 2h8v12h-16z" fill="#E8C060"/><circle cx="1323" cy="52" r="3" fill="#D89070"/><path d="M1318 61c0-3 2-5 5-5s5 2 5 5z" fill="#4A90D0"/>
<path d="M1348 43l2.700 6 6.300.6-4.700 4.300 1.400 6.400-5.700-3.400-5.700 3.400 1.400-6.400-4.700-4.300 6.300-.6z" fill="#00f"/>
<rect x="1384" y="45" width="15" height="14" rx="2" fill="none" stroke="#00f" stroke-width="1.400"/><path d="M1390 45v14M1386.500 49h2M1386.500 52h2M1386.500 55h2" stroke="#00f" stroke-width="1.100"/>
<rect x="1420" y="44" width="14" height="17" rx="2" fill="#f2f2f2" stroke="#555" stroke-width="1.200"/><path d="M1427 60v-5M1430 60v-8M1433 60v-6" stroke="#3090E0" stroke-width="1.800"/><path d="M1422 48h3M1422 52h3" stroke="#C03030" stroke-width="1.300"/>
<rect x="1454" y="45" width="15" height="14" rx="2" fill="none" stroke="#f00" stroke-width="1.400"/><path d="M1461 45v14M1456.500 49h2.500M1456.500 52h2.500M1456.500 55h2.500" stroke="#f00" stroke-width="1.100"/>
<path d="M1492 51a7.500 7.500 0 0 1 13-4M1507 53a7.500 7.500 0 0 1-13 4" fill="none" stroke="#2A80D0" stroke-width="3"/><path d="M1505 42v6h-6M1494 62v-6h6" fill="#40A0E0"/>
<rect x="1528" y="47" width="16" height="13" rx="1" fill="#DDB010"/><circle cx="1533" cy="53.500" r="3.500" fill="#333"/><rect x="1539" y="50" width="3" height="7" fill="#333"/><path d="M1531 47l8-5" stroke="#DDB010" stroke-width="1.300"/>
<rect x="1565" y="44" width="14" height="17" rx="3" fill="#E8E8D8" stroke="#666" stroke-width="1.200"/><text x="1572" y="57" font-size="14" class="b" text-anchor="middle" fill="#555">S</text>
<rect x="1600" y="44" width="16" height="17" fill="#A81818"/><text x="1605" y="54" font-size="10" fill="#fff" class="b" text-anchor="middle" style="font-family:'Liberation Sans','Noto Sans CJK SC',sans-serif">文</text><text x="1611" y="60" font-size="11" fill="#ffe040" class="b" text-anchor="middle">A</text>
<path d="M1638 48a6 6 0 0 1 11 0v5h-11z" fill="#a0a0b0" opacity=".8"/><rect x="1637" y="53" width="8" height="8" rx="1" fill="#D88080"/>
<circle cx="1680" cy="52" r="8.500" fill="#B06A30"/><circle cx="1680" cy="54" r="6" fill="#F2C8A0"/><circle cx="1677" cy="50" r="1.200" fill="#222"/><circle cx="1683" cy="50" r="1.200" fill="#222"/><path d="M1676 56h8" stroke="#c33" stroke-width="1.500"/>
<circle cx="1716" cy="52" r="8" fill="#555"/><text x="1716" y="56.500" font-size="11" class="b" text-anchor="middle" fill="#e8e8e8">M</text>
<path d="M1744 52h14M1746 48v8M1749 46v12M1753 46v12M1756 48v8" stroke="#D87888" stroke-width="2"/>
<rect x="1780" y="44" width="10" height="13" fill="#B8D0F0" stroke="#8098B8" stroke-width=".8"/><rect x="1784" y="48" width="10" height="13" fill="#C8DCF4" stroke="#8098B8" stroke-width=".8"/>
<path d="M1818 46l13 13M1831 46l-13 13" stroke="#A83838" stroke-width="2.200"/>
<path d="M1852 44h15" stroke="#4A90E0" stroke-width="2"/><path d="M1852 48h10" stroke="#30A050" stroke-width="2"/><path d="M1852 52h7" stroke="#E03030" stroke-width="2"/><path d="M1852 56h5" stroke="#E0A030" stroke-width="2"/>
<circle cx="1861" cy="56" r="2.800" fill="none" stroke="#222" stroke-width="1.400"/><circle cx="1865" cy="51" r="2.800" fill="none" stroke="#222" stroke-width="1.400"/>
<rect x="1880" y="35" width="32" height="32" rx="4" fill="#D0D0DC"/>
<path d="M1889 46h13M1889 52h13M1889 58h13" stroke="#00f" stroke-width="1.800"/>

<!-- bookmarks toolbar -->
<rect y="71" width="1920" height="42" fill="#1E90FF"/>
<g>
<circle cx="17.500" cy="92" r="8" fill="#7a8ea8"/><circle cx="17.500" cy="93" r="5" fill="none" stroke="#1060B0" stroke-width="2"/><path d="M17.500 86v6" stroke="#1060B0" stroke-width="2"/>
<circle cx="50" cy="91" r="4.500" fill="#222"/><circle cx="57" cy="88" r="4.500" fill="#999"/><circle cx="57" cy="96" r="4.500" fill="#bbb"/>
<path d="M84 84h9l4 4v12H84z" fill="#f0f0f0"/><rect x="83" y="91" width="14" height="6" fill="#A07830"/><text x="90" y="96.500" font-size="6" fill="#fff" text-anchor="middle" class="b">ZIP</text>
<path d="M120 84h6l2 2h6v12h-14z" fill="#D8E4F0" stroke="#6a8aaa" stroke-width=".6"/><path d="M121 92h7" stroke="#1060A0" stroke-width="2"/><path d="M127 90l5 8M132 90l-5 8" stroke="#D02020" stroke-width="2"/>
<rect x="154" y="85" width="15" height="15" rx="1.500" fill="#C04040" stroke="#882020"/><rect x="157" y="90" width="9" height="7" fill="#fff"/><path d="M160 90v7M163 90v7" stroke="#C04040"/>
<path d="M191 88h3l7 8h3M191 96h3l7-8h3" fill="none" stroke="#111" stroke-width="1.800"/><path d="M203 85l3 3-3 3zM203 93l3 3-3 3z" fill="#111"/>
<circle cx="233.500" cy="92" r="8" fill="#E86A10"/><circle cx="234.500" cy="92" r="4" fill="#2A5AA0"/><path d="M226 90c1-6 8-8 12-5-3 0-4 2-5 3-3 0-5 0-7 2z" fill="#F8C020"/>
<rect x="262" y="85" width="14" height="15" fill="#fff"/><text x="269" y="97" font-size="12" fill="#902030" text-anchor="middle" class="r b">C∫∫</text>
<rect x="299" y="85" width="14" height="15" fill="#fff"/><text x="306" y="97" font-size="12" fill="#902030" text-anchor="middle" class="r b">C∫∫</text>
<rect x="335" y="84" width="15" height="16" fill="#f2f2f2"/><rect x="335" y="84" width="15" height="4" fill="#E89030"/><path d="M337 91h3M342 91h3M337 95h3M342 95h3M347 91h2M347 95h2" stroke="#555" stroke-width="1.500"/>
<path d="M372 84h8l4 4v12h-12z" fill="#C8DCF0" stroke="#7090B0" stroke-width=".8"/><path d="M374 90h7M374 93h7M374 96h7" stroke="#6080A0"/>
<circle cx="414" cy="92" r="7.500" fill="#999"/><circle cx="414" cy="92" r="5.500" fill="#ccc"/><path d="M414 87c2 0 2 3 2 4l1 2h-6l1-2c0-1 0-4 2-4z" fill="#fff"/>
<path d="M445 84h10l4 4v8l-4 4h-10l-4-4v-8z" fill="#E81030"/><text x="450" y="95.500" font-size="9.500" class="b" fill="#fff" text-anchor="middle">ABP</text>
<path d="M480 92l6-7 7 5v10h-13z" fill="#C8DCF0" stroke="#7090B0"/><rect x="481" y="93" width="7" height="6" fill="#444"/><path d="M488 86a6 6 0 0 1 4 8" fill="none" stroke="#2A70C0" stroke-width="1.500"/>
<rect x="514" y="86" width="16" height="12" rx="1.500" fill="#BDD8F2" stroke="#fff"/><path d="M516 89h12M516 92h12M518 95h8" stroke="#5A80A8" stroke-dasharray="1.500 1"/>
<circle cx="554" cy="88" r="5.500" fill="#F0A020"/><ellipse cx="552" cy="94" rx="8" ry="5" fill="#f4f4f4"/>
<rect x="577" y="85" width="15" height="16" fill="#fff"/><path d="M579 85v16" stroke="#111" stroke-width="2"/><path d="M583 99V88h6v6h-6" fill="none" stroke="#30A050" stroke-width="2"/><rect x="580" y="80" width="16" height="10" rx="2" fill="#E03060"/><text x="588" y="89" font-size="9.500" fill="#111" class="b" text-anchor="middle">11</text>
<path d="M612 99l8-9" stroke="#8CB8E0" stroke-width="3"/><path d="M620 84c2-1 4 0 5 0l-3 3 2 2 3-3c0 2-1 5-5 5z" fill="#B0C8D8"/>
<path d="M648 88h6l2 2h9v10h-17z" fill="#F2D890"/><rect x="649" y="91" width="14" height="8" fill="#E8E0B0" stroke="#C8A850" stroke-width=".5"/><path d="M656 91l7-6" stroke="#9AA0A8" stroke-width="2.500"/>
</g>

<!-- tab strip -->
<rect y="113" width="1884" height="27" fill="url(#tg)"/>
<rect y="140" width="1884" height="10" fill="#fff"/>
<rect x="0" y="113" width="224" height="37" rx="15" fill="#00008B"/><rect x="0" y="113" width="20" height="37" fill="#00008B"/>
<rect x="226" y="113" width="223" height="37" rx="15" fill="#F5DEB3"/>
<rect x="452" y="113" width="223" height="37" rx="15" fill="#F5DEB3"/>
<circle cx="15.500" cy="133" r="7.500" fill="#fff"/><path d="M16 126c1 3-3 5-3.500 8-.3-1-1-2-1-2-1 2-1 4 0 6s3 3 4.500 3 4-1 5-4c.5-2 0-4-1-5.500-.5 1-1 1.500-1.500 1.500.5-3-1-5.500-2.500-7z" fill="#e8102a"/>
<text x="30" y="138" class="b" font-size="12.800" fill="#fff" textLength="175" lengthAdjust="spacingAndGlyphs">1 Symbole in Menüs - Individ</text>
<rect x="180" y="120" width="25" height="24" fill="url(#f1)"/>
<path d="M205 129l8 8M213 129l-8 8" stroke="#ff0" stroke-width="1"/>
<rect x="233" y="125" width="16" height="16" fill="#1E3A60"/><path d="M237 132c0-3 3-4 5-4s4 1 5 3l-1 6c-2 2-6 2-8 0z" fill="#f0f0f0"/>
<text x="255" y="138" font-size="12.800" fill="#7a0000" stroke="#7a0000" stroke-width=".25" textLength="170" lengthAdjust="spacingAndGlyphs">2 Forum - Thunderbird Mail DE</text>
<path d="M430 129l8 8M438 129l-8 8" stroke="#800000" stroke-width="1"/>
<circle cx="465" cy="133" r="8" fill="#111"/><path d="M461 141v-3c-2 .5-3 0-3.500-1.500M469 141v-3c2-2 2.500-4 1-6 .3-1 .2-2 0-2.500-1 0-2 .5-2.500 1-1.500-.4-3.500-.4-5 0-.5-.5-1.500-1-2.500-1-.2.5-.3 1.500 0 2.500-1.500 2-1 4 1 6" fill="#F5DEB3" opacity=".9"/>
<text x="480" y="138" font-size="12.800" fill="#7a0000" stroke="#7a0000" stroke-width=".25" textLength="173" lengthAdjust="spacingAndGlyphs">3 CSS/Firefox/Hamburger-Pan</text>
<rect x="630" y="120" width="24" height="24" fill="url(#f2)"/>
<path d="M655 129l8 8M663 129l-8 8" stroke="#800000" stroke-width="1"/>
<path d="M688 132h12M694 126v12" stroke="#20E0E0" stroke-width="1"/>

<!-- status bar -->
<rect y="1018" width="1920" height="32" fill="#FFE2C4"/>
<path d="M13 1029h4v-3c0-3 5-3 5 0v3h4v4c3 0 3 4 0 4v4H13v-4c3 0 3-4 0-4z" fill="#1E6FE0"/>
<path d="M54 1024l8 5v8l-8 5-8-5v-8z" fill="#E8A040"/><path d="M54 1024l8 5-8 5-8-5z" fill="#333"/>
<path d="M84 1027l12 14M96 1027l-12 14" stroke="#555" stroke-width="1.500"/><circle cx="85" cy="1040" r="2.500" fill="none" stroke="#444" stroke-width="1.300"/><circle cx="95" cy="1040" r="2.500" fill="none" stroke="#444" stroke-width="1.300"/><rect x="87" y="1023" width="11" height="8" fill="none" stroke="#888" stroke-dasharray="1.500 1"/>
<rect x="110" y="1019" width="54" height="30" fill="none" stroke="#800000" stroke-width="2.500"/>
<text x="116" y="1038.500" class="b" font-size="12" fill="#0a7a0a" textLength="43" lengthAdjust="spacingAndGlyphs">418 MB</text>

<!-- hamburger panel -->
<rect x="1643" y="69" width="274" height="390" rx="6" fill="#000" opacity=".12" transform="translate(0,1)" filter="url(#bl3)"/>
<g clip-path="url(#mc)"><rect x="1643" y="69" width="274" height="390" fill="#DADADA"/><rect x="1654" y="78" width="252" height="370" fill="#fff" filter="url(#bl5)"/><rect x="1660" y="84" width="240" height="358" fill="#fff"/></g>
<rect x="1642.500" y="68.500" width="275" height="391" rx="6" fill="none" stroke="#f00" stroke-width="2"/>

<!-- user row -->
<rect x="1664" y="78" width="6" height="16" fill="#556"/><circle cx="1669" cy="87" r="3.500" fill="#E8B890"/><path d="M1663 96c0-4 3-5 6-5s6 1 6 5z" fill="#555"/><rect x="1672" y="79" width="8" height="12" fill="#fff" stroke="#3A7AB0"/><path d="M1674 82h4M1674 85h4" stroke="#3A9AE0"/>
<text x="1691.500" y="92" class="mi" fill="#222" textLength="95" lengthAdjust="spacingAndGlyphs">milupo@sorbzilla.</text>
<rect x="1786.500" y="76.500" width="135" height="20" rx="3" fill="#fff" stroke="#555" stroke-width="1"/>
<text x="1791" y="91" font-size="12.600" fill="#222" textLength="125.500" lengthAdjust="spacingAndGlyphs">Nałoženski meni začinić</text>
<rect x="1649" y="103.500" width="253" height="1.500" fill="url(#sep)"/>

<!-- menu rows -->
<text x="1690" y="124" class="mi" textLength="67" lengthAdjust="spacingAndGlyphs">Nowy rajtark</text><text x="1860" y="124" class="sc" textLength="35.500" lengthAdjust="spacingAndGlyphs">Strg+T</text>
<text x="1690" y="148.500" class="mi" textLength="69.500" lengthAdjust="spacingAndGlyphs">Nowe wokno</text><text x="1857" y="148.500" class="sc" textLength="38" lengthAdjust="spacingAndGlyphs">Strg+N</text>
<text x="1690" y="172.500" class="mi" textLength="113.500" lengthAdjust="spacingAndGlyphs">Nowe priwatne wok...</text><text x="1814" y="172.500" class="sc" textLength="81" lengthAdjust="spacingAndGlyphs">Strg+Umsch+P</text>
<text x="1690" y="196" class="mi" textLength="29" lengthAdjust="spacingAndGlyphs">Hesła</text>
<text x="1690" y="220" class="mi" textLength="84" lengthAdjust="spacingAndGlyphs">Přidatki a drasty</text><text x="1813" y="220" class="sc" textLength="82" lengthAdjust="spacingAndGlyphs">Strg+Umsch+A</text>
<text x="1690" y="244" class="mi" textLength="42.500" lengthAdjust="spacingAndGlyphs">Ćišćeć...</text><text x="1859" y="244" class="sc" textLength="35.500" lengthAdjust="spacingAndGlyphs">Strg+P</text>
<text x="1690" y="268" class="mi" textLength="127" lengthAdjust="spacingAndGlyphs">Stronu składować jako...</text><text x="1860" y="268" class="sc" textLength="35" lengthAdjust="spacingAndGlyphs">Strg+S</text>
<text x="1690" y="292" class="mi" textLength="95" lengthAdjust="spacingAndGlyphs">Na stronje pytać...</text><text x="1860" y="292" class="sc" textLength="35" lengthAdjust="spacingAndGlyphs">Strg+F</text>
<text x="1691" y="318" class="mi" textLength="48" lengthAdjust="spacingAndGlyphs">Skalować</text><text x="1784" y="316" class="mi" textLength="28" lengthAdjust="spacingAndGlyphs">110%</text>
<text x="1690" y="344" class="mi" textLength="55" lengthAdjust="spacingAndGlyphs">Nastajenja</text>
<text x="1690" y="368" class="mi" textLength="73" lengthAdjust="spacingAndGlyphs">Dalše nastroje</text>
<text x="1690" y="392" class="mi" textLength="38" lengthAdjust="spacingAndGlyphs">Pomoc</text>
<text x="1688" y="416" class="mi" textLength="57" lengthAdjust="spacingAndGlyphs">Nowy start</text>
<text x="1690" y="440" class="mi" textLength="41" lengthAdjust="spacingAndGlyphs">Skónčić</text><text x="1812" y="440" class="sc" textLength="83" lengthAdjust="spacingAndGlyphs">Strg+Umsch+Q</text>
<path d="M1883 357l7 6-7 6M1883 381l7 6-7 6" fill="none" stroke="#777" stroke-width="1.100"/>

<!-- menu icons -->
<path d="M1666 114h12c2 0 3 2 3 4v2h-17v-3z" fill="#5AA0D0" stroke="#3A6A90" stroke-width=".6"/><circle cx="1678" cy="122" r="4.500" fill="#60B030"/><path d="M1675.500 122h5M1678 119.500v5" stroke="#fff" stroke-width="1.300"/>
<rect x="1664" y="135" width="12" height="9" fill="#50B850" stroke="#308030" stroke-width=".5"/><rect x="1668" y="141" width="13" height="10" fill="#80B8F0" stroke="#4080C0" stroke-width=".6"/>
<path d="M1664 160h17c0 5-3 7-6 6l-2-2-2 2c-3 1-7-1-7-6z" fill="#9FB2C8"/><rect x="1664" y="157" width="1.500" height="15" fill="#B08830"/>
<circle cx="1667" cy="187" r="3.500" fill="none" stroke="#D8B030" stroke-width="2"/><path d="M1669 190l9 9M1675 196l2-2" stroke="#D8B030" stroke-width="2.200"/>
<path d="M1665 212h4v-3c0-3 6-3 6 0v3h5v5c3 0 3 5 0 5v3h-15v-3c3 0 3-5 0-5z" fill="#20B020"/>
<rect x="1665" y="236" width="14" height="7" rx="1.500" fill="#999"/><rect x="1667" y="232" width="10" height="5" fill="#eee" stroke="#888" stroke-width=".5"/><rect x="1667" y="241" width="10" height="6" fill="#fff" stroke="#888" stroke-width=".5"/>
<rect x="1665" y="256" width="15" height="15" fill="#60A8E0" stroke="#2A70B0" stroke-width=".6"/><rect x="1667" y="257" width="5" height="6" fill="#fff"/><rect x="1674" y="264" width="6" height="6" fill="#1E5A98"/>
<circle cx="1675" cy="285" r="4.500" fill="#cfe6f8" stroke="#3A80C0" stroke-width="1.500"/><path d="M1671.500 288.500l-6 6" stroke="#E08030" stroke-width="2.400"/>
<circle cx="1671" cy="312" r="6" fill="#B8DCF4" stroke="#8AA0B0" stroke-width="1.500"/><path d="M1675 316l4 4" stroke="#E0A050" stroke-width="2.400"/>
<circle cx="1760" cy="310" r="5.500" fill="#B8DCF4" stroke="#8AA0B0" stroke-width="1.400"/><path d="M1757 310h6" stroke="#2060A0" stroke-width="1.300"/><path d="M1764 314l3 3" stroke="#E0A050" stroke-width="2.200"/>
<circle cx="1843" cy="310" r="5.500" fill="#B8DCF4" stroke="#8AA0B0" stroke-width="1.400"/><path d="M1840 310h6M1843 307v6" stroke="#2060A0" stroke-width="1.300"/><path d="M1847 314l3 3" stroke="#E0A050" stroke-width="2.200"/>
<rect x="1876" y="305" width="14" height="11" fill="#1E4ED0" stroke="#aaa" stroke-width="1.500"/>
<circle cx="1672" cy="340" r="5" fill="none" stroke="#666" stroke-width="3" stroke-dasharray="2.500 1.300"/><circle cx="1672" cy="340" r="3.500" fill="#fff" stroke="#888"/>
<rect x="1664" y="357" width="12" height="9" fill="#C090D0" stroke="#8A5A9A" stroke-width=".5"/><rect x="1666" y="360" width="12" height="9" fill="#B080C8" stroke="#8A5A9A" stroke-width=".5"/><rect x="1668" y="363" width="12" height="9" fill="#F0F0F0" stroke="#9A9A9A" stroke-width=".6"/>
<circle cx="1672" cy="388" r="8" fill="#2A60C8"/><text x="1672" y="393" font-size="13" class="b" fill="#fff" text-anchor="middle">?</text>
<path d="M1665 410a7.500 7.500 0 0 1 13-4M1679 414a7.500 7.500 0 0 1-13 4" fill="none" stroke="#2A80D0" stroke-width="2.800"/><path d="M1680 403v6h-6M1664 421v-6h6" fill="#40A0E0"/>
<rect x="1665" y="429" width="14" height="14" rx="2" fill="#D02020"/><path d="M1668.500 432.500l7 7M1675.500 432.500l-7 7" stroke="#fff" stroke-width="2"/>
<rect x="1893" y="459.500" width="5" height="4" fill="#8050A0"/><rect x="1898" y="459.500" width="2" height="3" fill="#E08030"/>
</svg>
</body></html>
